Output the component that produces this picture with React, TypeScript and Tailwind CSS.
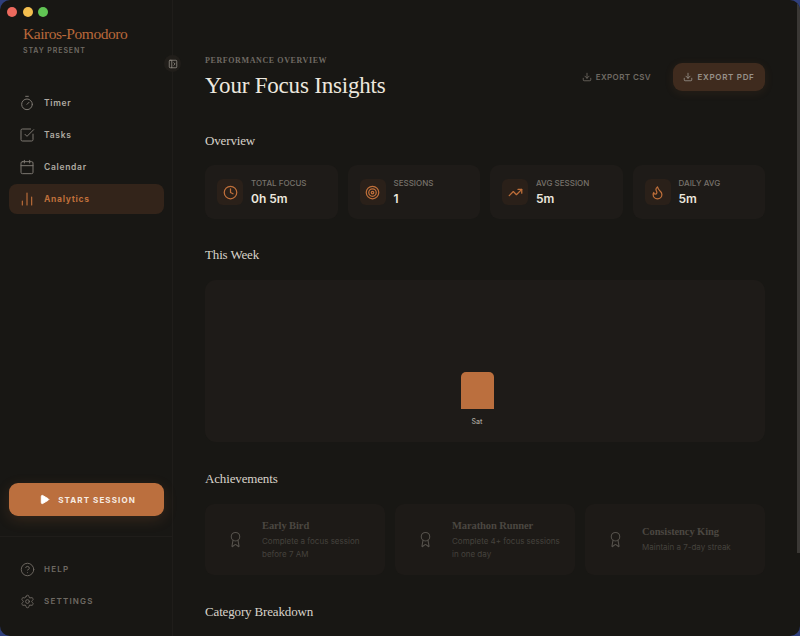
import { Award, ChartNoAxesColumn, Calendar, ClockIcon, Download, Flame, HelpCircle, PanelLeftOpen, Play, Settings, SquareCheckBig, Target, Timer, TrendingUp } from 'lucide-react';

const serif = 'font-["Liberation_Serif",serif]';

const navItems = [
  { label: 'Timer', icon: Timer },
  { label: 'Tasks', icon: SquareCheckBig },
  { label: 'Calendar', icon: Calendar },
];

const stats = [
  { label: 'TOTAL FOCUS', value: '0h 5m', icon: ClockIcon },
  { label: 'SESSIONS', value: '1', icon: Target },
  { label: 'AVG SESSION', value: '5m', icon: TrendingUp },
  { label: 'DAILY AVG', value: '5m', icon: Flame },
];

const achievements = [
  { title: 'Early Bird', text: 'Complete a focus session before 7 AM' },
  { title: 'Marathon Runner', text: 'Complete 4+ focus sessions in one day' },
  { title: 'Consistency King', text: 'Maintain a 7-day streak' },
];

function Sidebar() {
  return (
    <aside className="w-[173px] shrink-0 border-r border-[#1f1d1a] flex flex-col relative">
      <div className="pl-[23px] pt-[24px] h-[88px]">
        <div className={`${serif} text-[15.5px] leading-[19px] tracking-[-0.45px] text-[#b8683a]`}>Kairos-Pomodoro</div>
        <div className="mt-[3px] text-[7px] leading-[10px] font-semibold tracking-[0.9px] text-[#6f6a63]">STAY PRESENT</div>
      </div>
      <button className="absolute left-[164px] top-[55px] w-[17px] h-[17px] rounded-full bg-[#211e1a] flex items-center justify-center">
        <PanelLeftOpen className="w-[10px] h-[10px] text-[#8f8a82]" />
      </button>
      <nav className="pl-[9px] pr-[8px] flex flex-col gap-[2px]">
        {navItems.map((n) => (
          <div key={n.label} className="h-[30px] flex items-center pl-[10px] gap-[9px] rounded-[8px]">
            <n.icon className="w-[16px] h-[16px] text-[#7d7871]" strokeWidth={1.5} />
            <span className="text-[8.5px] font-semibold tracking-[0.7px] text-[#b0aba3]">{n.label}</span>
          </div>
        ))}
        <div className="h-[30px] flex items-center pl-[10px] gap-[9px] rounded-[8px] bg-[#33241a]">
          <ChartNoAxesColumn className="w-[16px] h-[16px] text-[#bf6f3a]" strokeWidth={1.7} />
          <span className="text-[8.5px] font-bold tracking-[0.7px] text-[#bf6f3a]">Analytics</span>
        </div>
      </nav>
      <div className="mt-auto pl-[9px] pr-[8px]">
        <button className="w-full h-[33px] pl-[2px] rounded-[9px] bg-[#bb6f3e] flex items-center justify-center gap-[8px] shadow-[0_4px_14px_rgba(187,111,62,0.18)]">
          <Play className="w-[11px] h-[11px] text-white fill-white" />
          <span className="text-[8px] font-bold tracking-[1.1px] text-[#f7ece3]">START SESSION</span>
        </button>
      </div>
      <div className="mt-[20px] border-t border-[#1f1d1a] px-[9px] pt-[17px] pb-[20px] flex flex-col gap-[2px]">
        {[{ label: 'HELP', icon: HelpCircle }, { label: 'SETTINGS', icon: Settings }].map((n) => (
          <div key={n.label} className="h-[30px] flex items-center pl-[11px] gap-[9px]">
            <n.icon className="w-[15px] h-[15px] text-[#6f6a63]" strokeWidth={1.5} />
            <span className="text-[8px] font-semibold tracking-[1.2px] text-[#6f6a63]">{n.label}</span>
          </div>
        ))}
      </div>
    </aside>
  );
}

function SectionTitle({ children }: { children: string }) {
  return <h2 className={`${serif} text-[13px] leading-[18px] tracking-[-0.15px] text-[#d8d3ca]`}>{children}</h2>;
}

export default function App() {
  return (
    <div className="w-[800px] h-[636px] bg-[#2f3f7c] font-['Inter',sans-serif]">
      <div className="relative w-full h-full rounded-[10px] overflow-hidden bg-[#181714] flex">
        <div className="absolute left-[7px] top-[7px] flex gap-[5.5px] z-10">
          <span className="w-[10px] h-[10px] rounded-full bg-[#ed6a5e]" />
          <span className="w-[10px] h-[10px] rounded-full bg-[#f4bf4f]" />
          <span className="w-[10px] h-[10px] rounded-full bg-[#61c554]" />
        </div>
        <Sidebar />
        <main className="flex-1 overflow-hidden pl-[32px] pr-[35px] pt-[55px]">
          <div className="flex items-start justify-between">
            <div>
              <div className={`${serif} text-[8px] leading-[11px] font-bold tracking-[0.6px] text-[#6f6a63]`}>PERFORMANCE OVERVIEW</div>
              <h1 className={`${serif} mt-[5px] text-[23px] leading-[30px] tracking-[-0.2px] text-[#ece7de]`}>Your Focus Insights</h1>
            </div>
            <div className="flex items-center gap-[11px] mt-[8px]">
              <button className="h-[28px] px-[11px] flex items-center gap-[4px] text-[#6f6a63]">
                <Download className="w-[10px] h-[10px]" />
                <span className="text-[8px] font-semibold tracking-[0.4px]">EXPORT CSV</span>
              </button>
              <button className="h-[28px] w-[92px] rounded-[9px] bg-[#3f2b1e] flex items-center justify-center gap-[4px] text-[#98928a] shadow-[0_2px_10px_rgba(187,111,62,0.1)]">
                <Download className="w-[10px] h-[10px]" />
                <span className="text-[8px] font-semibold tracking-[0.7px]">EXPORT PDF</span>
              </button>
            </div>
          </div>

          <div className="mt-[31px]"><SectionTitle>Overview</SectionTitle></div>
          <div className="mt-[15px] grid grid-cols-4 gap-[10px]">
            {stats.map((s) => (
              <div key={s.label} className="h-[54px] rounded-[9px] bg-[#1e1b18] flex items-center pl-[12px] gap-[8px]">
                <div className="w-[26px] h-[26px] rounded-[6px] bg-[#2a2019] flex items-center justify-center">
                  <s.icon className="w-[15px] h-[15px] text-[#bf6f3a]" strokeWidth={2} />
                </div>
                <div>
                  <div className="text-[8px] leading-[11px] font-medium text-[#77726b]">{s.label}</div>
                  <div className="mt-[2px] text-[12px] leading-[16px] font-semibold text-[#ece7de]">{s.value}</div>
                </div>
              </div>
            ))}
          </div>

          <div className="mt-[27px]"><SectionTitle>This Week</SectionTitle></div>
          <div className="mt-[16px] h-[162px] rounded-[11px] bg-[#1e1b18] flex flex-col items-center justify-end pb-[15px] pr-[16px]">
            <div className="w-[33px] h-[37px] rounded-t-[5px] bg-[#bb6f3e]" />
            <div className="mt-[8px] text-[7px] leading-[10px] font-medium text-[#a8a39b]">Sat</div>
          </div>

          <div className="mt-[28px]"><SectionTitle>Achievements</SectionTitle></div>
          <div className="mt-[16px] grid grid-cols-3 gap-[10px]">
            {achievements.map((a) => (
              <div key={a.title} className="h-[71px] rounded-[9px] bg-[#1d1a17] flex items-center pl-[15px] pr-[10px] gap-[12px]">
                <div className="w-[30px] h-[30px] shrink-0 flex items-center justify-center">
                  <Award className="w-[17px] h-[17px] text-[#56524c]" strokeWidth={1.5} />
                </div>
                <div>
                  <div className={`${serif} text-[10.5px] leading-[14px] font-bold tracking-[-0.1px] text-[#4b4741]`}>{a.title}</div>
                  <div className="mt-[2px] text-[8px] leading-[13px] text-[#45423d]">{a.text}</div>
                </div>
              </div>
            ))}
          </div>

          <div className="mt-[28px]"><SectionTitle>Category Breakdown</SectionTitle></div>
        </main>
        <div className="absolute right-0 top-0 h-[553px] w-[3px] bg-[#3a3835]" />
      </div>
    </div>
  );
}
